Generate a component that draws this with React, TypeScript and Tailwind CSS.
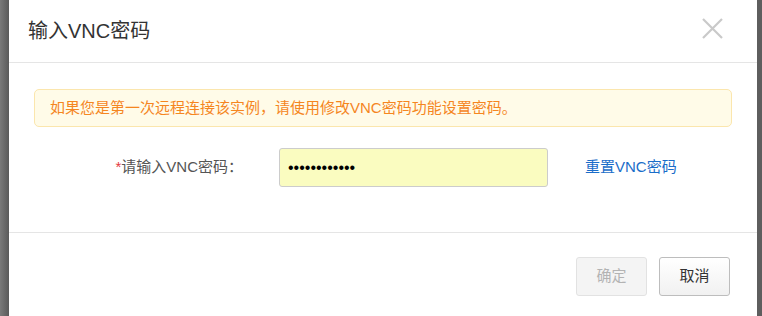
import React from 'react';

const font = { fontFamily: '"Liberation Sans", "Noto Sans CJK SC", sans-serif' };

const App = () => {
  return (
    <div className="flex h-[316px] w-[762px] overflow-hidden bg-[#5e5e5e]" style={font}>
      <div className="w-[9px] bg-gradient-to-r from-[#7a7a7a] to-[#5a5a5a]" />
      <div className="flex w-[748px] flex-col bg-white">
        {/* header */}
        <div className="flex h-[63px] shrink-0 items-center justify-between border-b border-[#e5e5e5] pl-[19px] pr-[34px]">
          <h3 className="text-[20px] text-[#333]">输入VNC密码</h3>
          <svg width="21" height="21" viewBox="0 0 21 21" className="-mt-[6px]">
            <path d="M1 1L20 20M20 1L1 20" stroke="#c9c9c9" strokeWidth="2.2" />
          </svg>
        </div>

        {/* body */}
        <div className="flex h-[170px] shrink-0 flex-col border-b border-[#e5e5e5] px-[25px] pt-[26px]">
          <div className="flex h-[38px] items-center rounded-[5px] border border-[#fbe6ad] bg-[#fffbe8] pl-[15px] text-[15px] text-[#f5861f]">
            如果您是第一次远程连接该实例，请使用修改VNC密码功能设置密码。
          </div>
          <div className="mt-[21px] flex items-center">
            <label className="w-[209px] text-right text-[15px] text-[#555]">
              <span className="text-[#e4393c]">*</span>请输入VNC密码：
            </label>
            <input
              type="password"
              readOnly
              value="123456789012"
              className="ml-[36px] h-[39px] w-[269px] rounded-[3px] border border-[#cccccc] bg-[#fafcc0] pl-[8px] text-[16px] text-black outline-none"
            />
            <a className="ml-[37px] text-[15px] text-[#1a6dc9]">重置VNC密码</a>
          </div>
        </div>

        {/* footer */}
        <div className="flex justify-end gap-[12px] pr-[27px] pt-[24px]">
          <button className="h-[39px] w-[71px] rounded-[3px] border border-[#e2e2e2] bg-[#f4f4f4] text-[15px] text-[#b3b3b3]">
            确定
          </button>
          <button className="h-[39px] w-[71px] rounded-[3px] border border-[#bdbdbd] bg-gradient-to-b from-white to-[#f1f1f1] text-[15px] text-[#333]">
            取消
          </button>
        </div>
      </div>
      <div className="w-[5px] bg-[#5e5e5e]" />
    </div>
  );
};

export default App;
